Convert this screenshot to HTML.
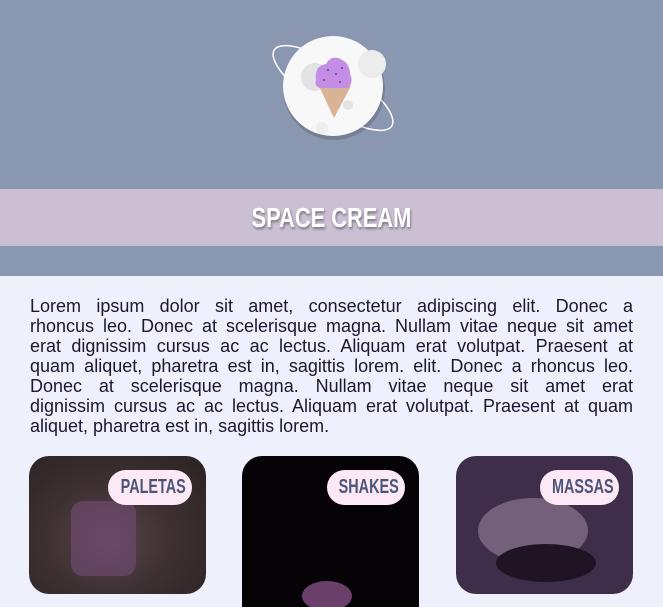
<!DOCTYPE html>
<html><head><meta charset="utf-8"><style>
*{margin:0;padding:0;box-sizing:border-box}
html,body{width:663px;height:607px;overflow:hidden;background:#eef0fc;font-family:"Liberation Sans",sans-serif}
.hdr{position:absolute;left:0;top:0;width:663px;height:276px;background:#8a97b0}
.band{position:absolute;left:0;top:189px;width:663px;height:57px;background:#cbbfd4;text-align:center;color:#fff;font-weight:bold;font-size:28px;line-height:57px;text-shadow:1px 2px 3px rgba(0,0,0,.4)}
.band span{display:inline-block;transform:scaleX(.78)}
.txt{position:absolute;left:30px;top:296px;width:603px;font-size:18px;line-height:20px;color:#1c1830}
.txt div{text-align:justify;text-align-last:justify;white-space:nowrap}
.txt div.l{text-align-last:left}
.card{position:absolute;top:456px;width:177px;height:138px;border-radius:20px;overflow:hidden}
.pill{position:absolute;top:14px;height:35px;border-radius:18px;background:#fde9f6;color:#4a5577;font-weight:bold;font-size:20px;line-height:35px;text-align:center;white-space:nowrap}
.pill span{display:inline-block;transform:scaleX(.72)}
</style></head><body>
<div class="hdr"></div>
<svg style="position:absolute;left:260px;top:25px" width="150" height="125" viewBox="260 25 150 125">
<ellipse cx="333" cy="88" rx="70" ry="22" transform="rotate(33 333 88)" fill="none" stroke="#fff" stroke-width="1.5"/>
<circle cx="334" cy="89" r="51" fill="rgba(0,0,0,.15)"/>
<circle cx="333" cy="86" r="50" fill="#f8f8f8"/>
<circle cx="315" cy="77" r="14" fill="#e3e3e3"/>
<circle cx="372" cy="64" r="14" fill="#ececec"/>
<circle cx="348" cy="105" r="5" fill="#e3e3e3"/>
<circle cx="322" cy="128" r="6" fill="#eee"/>
<path d="M319 86 L351 86 L334 118 Z" fill="#d9b396"/>
<path d="M316 80 Q314 66 326 64 Q330 56 338 58 Q350 62 350 74 Q354 82 348 88 L320 88 Q314 86 316 80Z" fill="#c48de6"/>
<g fill="#6a3d8c"><circle cx="328" cy="70" r="1"/><circle cx="336" cy="74" r="1"/><circle cx="342" cy="68" r="1"/><circle cx="324" cy="80" r="1"/><circle cx="340" cy="82" r="1"/></g>
</svg>
<div class="band"><span>SPACE CREAM</span></div>
<div class="txt">
<div>Lorem ipsum dolor sit amet, consectetur adipiscing elit. Donec a</div>
<div>rhoncus leo. Donec at scelerisque magna. Nullam vitae neque sit amet</div>
<div>erat dignissim cursus ac ac lectus. Aliquam erat volutpat. Praesent at</div>
<div>quam aliquet, pharetra est in, sagittis lorem. elit. Donec a rhoncus leo.</div>
<div>Donec at scelerisque magna. Nullam vitae neque sit amet erat</div>
<div>dignissim cursus ac ac lectus. Aliquam erat volutpat. Praesent at quam</div>
<div class="l">aliquet, pharetra est in, sagittis lorem.</div>
</div>
<div class="card" style="left:29px;background:radial-gradient(ellipse at 45% 60%,#5a4450 0%,#3e3132 45%,#2a2222 100%)">
<div style="position:absolute;left:42px;top:45px;width:65px;height:75px;border-radius:12px;background:#6e4a70;opacity:.7"></div>
<div class="pill" style="left:79px;width:84px"><span>PALETAS</span></div></div>
<div class="card" style="left:242px;height:151px;border-radius:20px 20px 0 0;background:#050306">
<div style="position:absolute;left:60px;top:125px;width:50px;height:30px;border-radius:50%;background:#6a3f6a"></div>
<div class="pill" style="left:85px;width:78px"><span>SHAKES</span></div></div>
<div class="card" style="left:456px;background:#3f2e4a">
<div style="position:absolute;left:22px;top:42px;width:110px;height:65px;border-radius:50%;background:#75607c"></div>
<div style="position:absolute;left:40px;top:88px;width:100px;height:38px;border-radius:50%;background:#1e1424"></div>
<div class="pill" style="left:84px;width:79px"><span>MASSAS</span></div></div>
</body></html>
